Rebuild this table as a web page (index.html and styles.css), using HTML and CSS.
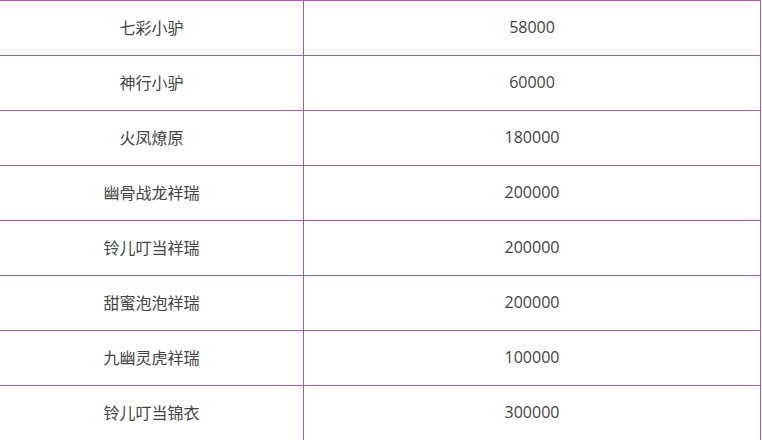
FILE: index.html
```html
<!DOCTYPE html>
<html lang="zh-CN">
<head>
<meta charset="utf-8">
<link rel="stylesheet" href="styles.css">
</head>
<body>
<table class="price-table">
  <tbody>
    <tr><td class="name">七彩小驴</td><td class="value">58000</td></tr>
    <tr><td class="name">神行小驴</td><td class="value">60000</td></tr>
    <tr><td class="name">火凤燎原</td><td class="value">180000</td></tr>
    <tr><td class="name">幽骨战龙祥瑞</td><td class="value">200000</td></tr>
    <tr><td class="name">铃儿叮当祥瑞</td><td class="value">200000</td></tr>
    <tr><td class="name">甜蜜泡泡祥瑞</td><td class="value">200000</td></tr>
    <tr><td class="name">九幽灵虎祥瑞</td><td class="value">100000</td></tr>
    <tr><td class="name">铃儿叮当锦衣</td><td class="value">300000</td></tr>
  </tbody>
</table>
</body>
</html>
```
FILE: styles.css
```css
html, body {
  margin: 0;
  padding: 0;
  background: #ffffff;
}
.price-table {
  width: 761px;
  border-collapse: collapse;
  table-layout: fixed;
  font-family: "Noto Sans CJK SC", "Microsoft YaHei", sans-serif;
  font-size: 16px;
  color: #444444;
}
.price-table tr:first-child td {
  border-top: 1px solid #a45ca6;
}
.price-table td {
  height: 52px;
  padding: 0 0 2px 0;
  text-align: center;
  vertical-align: middle;
  border-bottom: 1px solid #a45ca6;
  border-right: 1px solid #a45ca6;
  line-height: 20px;
}
.price-table td.name {
  width: 303px;
}
.price-table td.value {
  font-family: "Open Sans", "Noto Sans CJK SC", sans-serif;
  color: #3f3f3f;
}
```
